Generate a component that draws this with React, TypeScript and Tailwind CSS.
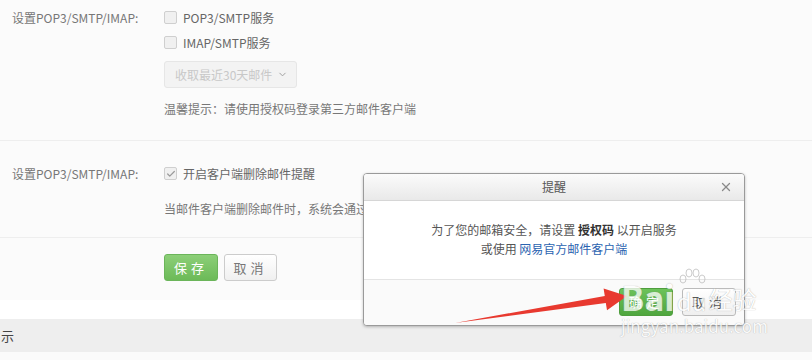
import { Check, ChevronDown, X } from "lucide-react";

const font = "font-['Noto_Sans_CJK_SC','Noto_Sans',sans-serif]";

function Box({ checked }: { checked?: boolean }) {
  return (
    <span className="mr-[4px] flex h-[13px] w-[13px] shrink-0 items-center justify-center rounded-[2px] border border-[#cfcfcf] bg-[#f0f0f0]">
      {checked && <Check size={10} strokeWidth={3} className="text-[#9a9a9a]" />}
    </span>
  );
}

function Label() {
  return (
    <div className="w-[164px] shrink-0 pl-[12px] leading-[25px] text-[#777]">设置POP3/SMTP/IMAP:</div>
  );
}

export default function App() {
  return (
    <div className={`relative h-[360px] w-[812px] overflow-hidden bg-[#fbfbfb] text-[12px] ${font}`}>
      {/* section 1 */}
      <div className="flex border-b border-[#eeeeee] pt-[5px] pb-[19px]">
        <Label />
        <div className="flex flex-col text-[#666]">
          <div className="flex h-[25px] items-center">
            <Box />
            <span className="ml-[2px]">POP3/SMTP服务</span>
          </div>
          <div className="flex h-[25px] items-center">
            <Box />
            <span className="ml-[2px]">IMAP/SMTP服务</span>
          </div>
          <div className="mt-[6px] flex h-[27px] w-[133px] items-center justify-between rounded-[3px] border border-[#e6e6e6] bg-[#f3f3f3] pl-[10px] pr-[8px] text-[#c8c8c8]">
            <span>收取最近30天邮件</span>
            <ChevronDown size={11} strokeWidth={2} className="text-[#999]" />
          </div>
          <div className="mt-[8px] leading-[25px] text-[#777]">温馨提示：请使用授权码登录第三方邮件客户端</div>
        </div>
      </div>

      {/* section 2 */}
      <div className="flex border-b border-[#eeeeee] pt-[20px] pb-[16px]">
        <Label />
        <div className="flex flex-col text-[#666]">
          <div className="flex h-[25px] items-center">
            <Box checked />
            <span className="ml-[2px]">开启客户端删除邮件提醒</span>
          </div>
          <div className="mt-[10px] leading-[25px] text-[#777]">当邮件客户端删除邮件时，系统会通过短信提醒您</div>
        </div>
      </div>

      {/* actions */}
      <div className="flex gap-[6px] pl-[164px] pt-[16px] pb-[19px]">
        <button className="h-[27px] w-[54px] rounded-[3px] border border-[#6bb55a] bg-gradient-to-b from-[#8ccf78] to-[#6cba58] text-[13px] tracking-[4px] text-white">
          保存
        </button>
        <button className="h-[27px] w-[53px] rounded-[3px] border border-[#cccccc] bg-gradient-to-b from-[#ffffff] to-[#f0f0f0] text-[13px] tracking-[4px] text-[#777]">
          取消
        </button>
      </div>

      <div className="h-[19px] bg-white" />
      <div className="flex h-[33px] items-center bg-[#eeeeee] pl-[1px] text-[13px] text-[#444]">示</div>

      {/* dialog */}
      <div className="absolute left-[363px] top-[173px] flex h-[153px] w-[382px] flex-col overflow-hidden rounded-[4px] border border-[#9a9a9a] bg-white shadow-[0_1px_3px_rgba(0,0,0,0.25)]">
        <div className="relative flex h-[27px] shrink-0 items-center justify-center border-b border-[#d6d6d6] bg-gradient-to-b from-[#fbfbfb] to-[#e9e9e9] text-[#555]">
          提醒
          <X size={14} strokeWidth={2.2} className="absolute right-[11px] top-[6px] text-[#8a8a8a]" />
        </div>
        <div className="flex h-[78px] flex-col items-center pt-[19px] leading-[19px] text-[#555]">
          <div>
            为了您的邮箱安全，请设置 <b className="font-bold text-[#333]">授权码</b> 以开启服务
          </div>
          <div>
            或使用 <span className="text-[#2b63b0]">网易官方邮件客户端</span>
          </div>
        </div>
        <div className="flex flex-1 justify-end gap-[9px] border-t border-[#e4e4e4] bg-[#fafafa] pr-[8px] pt-[8px]">
          <button className="h-[28px] w-[54px] rounded-[3px] border border-[#4f9e3e] bg-gradient-to-b from-[#6cc25a] to-[#4fa63e] text-[13px] tracking-[4px] text-white">
            确定
          </button>
          <button className="h-[28px] w-[54px] rounded-[3px] border border-[#bbbbbb] bg-gradient-to-b from-[#ffffff] to-[#efefef] text-[13px] tracking-[4px] text-[#555]">
            取消
          </button>
        </div>
      </div>

      {/* red arrow */}
      <svg className="pointer-events-none absolute left-0 top-0" width="812" height="360">
        <polygon
          points="455,323 605.8,302.9 607,310.3 627,296 603.6,288.5 604.8,295.9"
          fill="#e8392f"
        />
      </svg>

      {/* watermark */}
      <div className="pointer-events-none absolute left-[621px] top-[268px] flex flex-col text-white opacity-75">
        <div className="flex items-end">
          <span className="text-[34px] font-bold leading-[34px] [text-shadow:0_0_1px_#8a8a8a]">Bai</span>
          <div className="relative ml-[2px] flex flex-col items-center">
            <svg width="30" height="22" viewBox="0 0 30 22" className="mb-[-2px]">
              <g fill="none" stroke="#bbb" strokeWidth="1">
                <ellipse cx="6" cy="11" rx="3" ry="4" />
                <ellipse cx="12" cy="5" rx="3" ry="4" />
                <ellipse cx="19" cy="5" rx="3" ry="4" />
                <ellipse cx="25" cy="11" rx="3" ry="4" />
              </g>
            </svg>
            <span className="text-[24px] leading-[26px] [text-shadow:0_0_1px_#8a8a8a]">du</span>
          </div>
          <span className="ml-[2px] text-[24px] leading-[30px] [text-shadow:0_0_1px_#8a8a8a]">经验</span>
        </div>
        <span className="mt-[2px] text-[17px] leading-[20px] [text-shadow:0_0_1px_#8a8a8a]">jingyan.baidu.com</span>
      </div>
    </div>
  );
}
